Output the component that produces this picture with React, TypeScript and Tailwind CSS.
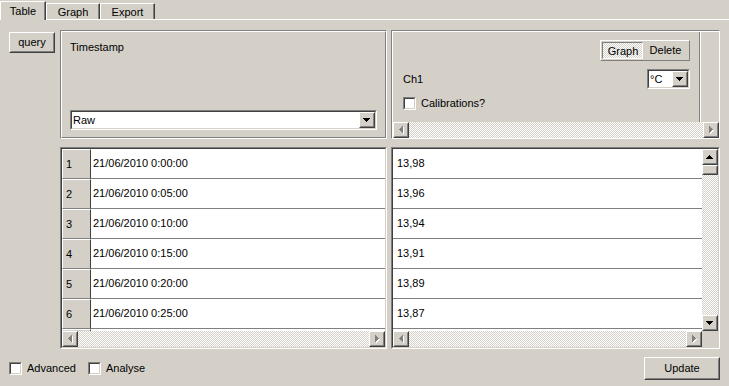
import type { ReactNode } from "react";

type BoxProps = {
  className?: string;
  innerClassName?: string;
  children?: ReactNode;
};

const dither =
  "bg-[image:repeating-conic-gradient(#ffffff_0%_25%,#d4d0c8_0%_50%)] bg-[length:2px_2px]";

// classic 3D frames, drawn as two nested 1px borders
function Raised({ className = "", innerClassName = "", children }: BoxProps) {
  return (
    <div
      className={`border border-t-white border-l-white border-r-[#404040] border-b-[#404040] ${className}`}
    >
      <div
        className={`h-full w-full border border-t-[#d4d0c8] border-l-[#d4d0c8] border-r-[#808080] border-b-[#808080] ${innerClassName}`}
      >
        {children}
      </div>
    </div>
  );
}

function Sunken({ className = "", innerClassName = "", children }: BoxProps) {
  return (
    <div
      className={`border border-t-[#808080] border-l-[#808080] border-r-white border-b-white ${className}`}
    >
      <div
        className={`h-full w-full border border-t-[#404040] border-l-[#404040] border-r-[#d4d0c8] border-b-[#d4d0c8] ${innerClassName}`}
      >
        {children}
      </div>
    </div>
  );
}

function Etched({ className = "", innerClassName = "", children }: BoxProps) {
  return (
    <div
      className={`border border-t-[#808080] border-l-[#808080] border-r-white border-b-white ${className}`}
    >
      <div
        className={`h-full w-full border border-t-white border-l-white border-r-[#808080] border-b-[#808080] ${innerClassName}`}
      >
        {children}
      </div>
    </div>
  );
}

type Dir = "up" | "down" | "left" | "right";

function Arrow({ dir, disabled = false }: { dir: Dir; disabled?: boolean }) {
  const widths = [1, 3, 5, 7];
  const vertical = dir === "up" || dir === "down";
  const rects = widths.map((w, i) => {
    const off = (7 - w) / 2;
    if (dir === "up") return { x: off, y: i, w, h: 1 };
    if (dir === "down") return { x: off, y: 3 - i, w, h: 1 };
    if (dir === "left") return { x: i, y: off, w: 1, h: w };
    return { x: 3 - i, y: off, w: 1, h: w };
  });
  const width = vertical ? 8 : 5;
  const height = vertical ? 5 : 8;
  return (
    <svg width={width} height={height} shapeRendering="crispEdges">
      {disabled &&
        rects.map((r, i) => (
          <rect key={`s${i}`} x={r.x + 1} y={r.y + 1} width={r.w} height={r.h} fill="#ffffff" />
        ))}
      {rects.map((r, i) => (
        <rect
          key={i}
          x={r.x}
          y={r.y}
          width={r.w}
          height={r.h}
          fill={disabled ? "#808080" : "#000000"}
        />
      ))}
    </svg>
  );
}

function ArrowButton({ dir, disabled }: { dir: Dir; disabled?: boolean }) {
  return (
    <Raised
      className="h-[16px] w-[16px] shrink-0 bg-[#d4d0c8]"
      innerClassName="flex items-center justify-center"
    >
      <Arrow dir={dir} disabled={disabled} />
    </Raised>
  );
}

function HScroll({ className = "" }: { className?: string }) {
  return (
    <div className={`flex h-[16px] shrink-0 ${className}`}>
      <ArrowButton dir="left" disabled />
      <div className={`flex-1 ${dither}`} />
      <ArrowButton dir="right" disabled />
    </div>
  );
}

function VScroll() {
  return (
    <div className="flex w-[16px] shrink-0 flex-col">
      <ArrowButton dir="up" />
      <Raised className="h-[10px] w-[16px] shrink-0 bg-[#d4d0c8]" />
      <div className={`flex-1 ${dither}`} />
      <ArrowButton dir="down" />
    </div>
  );
}

function Button({ className = "", children }: BoxProps) {
  return (
    <Raised className={`bg-[#d4d0c8] ${className}`} innerClassName="flex items-center justify-center">
      {children}
    </Raised>
  );
}

function Combo({ value, className = "" }: { value: string; className?: string }) {
  return (
    <Sunken className={className} innerClassName="flex bg-white">
      <span className="flex flex-1 items-center pl-[1px]">{value}</span>
      <ArrowButton dir="down" />
    </Sunken>
  );
}

function Check({ label }: { label: string }) {
  return (
    <div className="flex items-center gap-[5px]">
      <Sunken className="h-[13px] w-[13px] shrink-0" innerClassName="bg-white" />
      <span>{label}</span>
    </div>
  );
}

function TabBar() {
  return (
    <div className="flex h-[20px] items-end">
      <div className="flex h-[19px] w-[46px] justify-center border-t border-l border-r border-t-white border-l-white border-r-[#404040] pt-[3px] shadow-[inset_-1px_0_#808080]">
        Table
      </div>
      {["Graph", "Export"].map((t, i) => (
        <div key={t} className={`flex h-[17px] flex-col ${i === 0 ? "w-[54px]" : "w-[55px]"}`}>
          <div className="flex flex-1 justify-center border-t border-l border-r border-t-white border-l-white border-r-[#404040] pt-[2px] shadow-[inset_-1px_0_#808080]">
            {t}
          </div>
          <div className="h-[1px] bg-white" />
        </div>
      ))}
      <div className="h-[1px] flex-1 bg-white" />
    </div>
  );
}

function TimestampGroup() {
  return (
    <Etched className="h-full w-[327px]" innerClassName="flex flex-col pl-[8px] pt-[9px] pb-[7px]">
      <span>Timestamp</span>
      <Combo value="Raw" className="mt-auto h-[20px] w-[307px]" />
    </Etched>
  );
}

function ChannelPanel() {
  return (
    <div className="h-full w-[329px] border border-t-[#808080] border-l-[#808080] border-r-white border-b-white">
      <div className="flex h-full flex-col border-t border-l border-t-white border-l-white">
        <div className="flex min-h-0 flex-1">
          <div className="flex flex-1 flex-col pt-[8px] pr-[9px] pl-[10px]">
            <div className="flex h-[21px] w-[90px] self-end border border-t-white border-l-white border-r-[#808080] border-b-[#808080] p-[1px]">
              <div
                className={`flex w-[41px] items-center justify-center border border-t-[#808080] border-l-[#808080] border-r-white border-b-white pt-[1px] pl-[1px] ${dither}`}
              >
                Graph
              </div>
              <div className="flex flex-1 items-center justify-center">Delete</div>
            </div>
            <div className="mt-[8px] flex items-center justify-between">
              <span>Ch1</span>
              <Combo value="°C" className="h-[20px] w-[43px]" />
            </div>
            <div className="mt-[8px]">
              <Check label="Calibrations?" />
            </div>
          </div>
          <div className="w-[20px] border-l border-l-[#808080] shadow-[inset_1px_0_#ffffff]" />
        </div>
        <HScroll />
      </div>
    </div>
  );
}

// the last row only peeks out above the scroll bar, so it carries no text
const dates = [
  "21/06/2010 0:00:00",
  "21/06/2010 0:05:00",
  "21/06/2010 0:10:00",
  "21/06/2010 0:15:00",
  "21/06/2010 0:20:00",
  "21/06/2010 0:25:00",
  "",
];

const values = ["13,98", "13,96", "13,94", "13,91", "13,89", "13,87", ""];

function DateTable() {
  return (
    <Sunken className="h-full w-[327px]" innerClassName="flex flex-col">
      <div className="min-h-0 flex-1 overflow-hidden bg-white">
        {dates.map((d, i) => (
          <div key={i} className="flex h-[30px] shrink-0">
            <div className="flex w-[29px] items-center border-t border-l border-r border-b border-t-white border-l-white border-r-[#404040] border-b-[#808080] bg-[#d4d0c8] pl-[3px]">
              {d ? i + 1 : ""}
            </div>
            <div className="flex flex-1 items-center border-b border-b-[#808080] pl-[2px]">{d}</div>
          </div>
        ))}
      </div>
      <HScroll />
    </Sunken>
  );
}

function ValueTable() {
  return (
    <Sunken className="h-full w-[329px]" innerClassName="flex flex-col">
      <div className="flex min-h-0 flex-1">
        <div className="min-h-0 flex-1 overflow-hidden bg-white">
          {values.map((v, i) => (
            <div key={i} className="flex h-[30px] items-center border-b border-b-[#808080] pl-[4px]">
              {v}
            </div>
          ))}
        </div>
        <VScroll />
      </div>
      <div className="flex h-[16px] shrink-0">
        <HScroll className="flex-1" />
        <div className="w-[16px] bg-[#d4d0c8]" />
      </div>
    </Sunken>
  );
}

export default function App() {
  return (
    <div className="flex h-[386px] w-[729px] flex-col overflow-hidden bg-[#d4d0c8] font-['Liberation_Sans',Arial,sans-serif] text-[11px] leading-[13px] text-black">
      <TabBar />
      <div className="flex pt-[10px]">
        <div className="w-[60px] pt-[2px] pl-[9px]">
          <Button className="h-[21px] w-[46px]">query</Button>
        </div>
        <div className="flex flex-col gap-[8px]">
          <div className="flex h-[109px] gap-[4px]">
            <TimestampGroup />
            <ChannelPanel />
          </div>
          <div className="flex h-[202px] gap-[4px]">
            <DateTable />
            <ValueTable />
          </div>
        </div>
      </div>
      <div className="mt-[8px] flex h-[23px] items-center pr-[9px] pl-[9px]">
        <div className="w-[79px]">
          <Check label="Advanced" />
        </div>
        <Check label="Analyse" />
        <Button className="ml-auto h-[23px] w-[76px]">Update</Button>
      </div>
    </div>
  );
}
